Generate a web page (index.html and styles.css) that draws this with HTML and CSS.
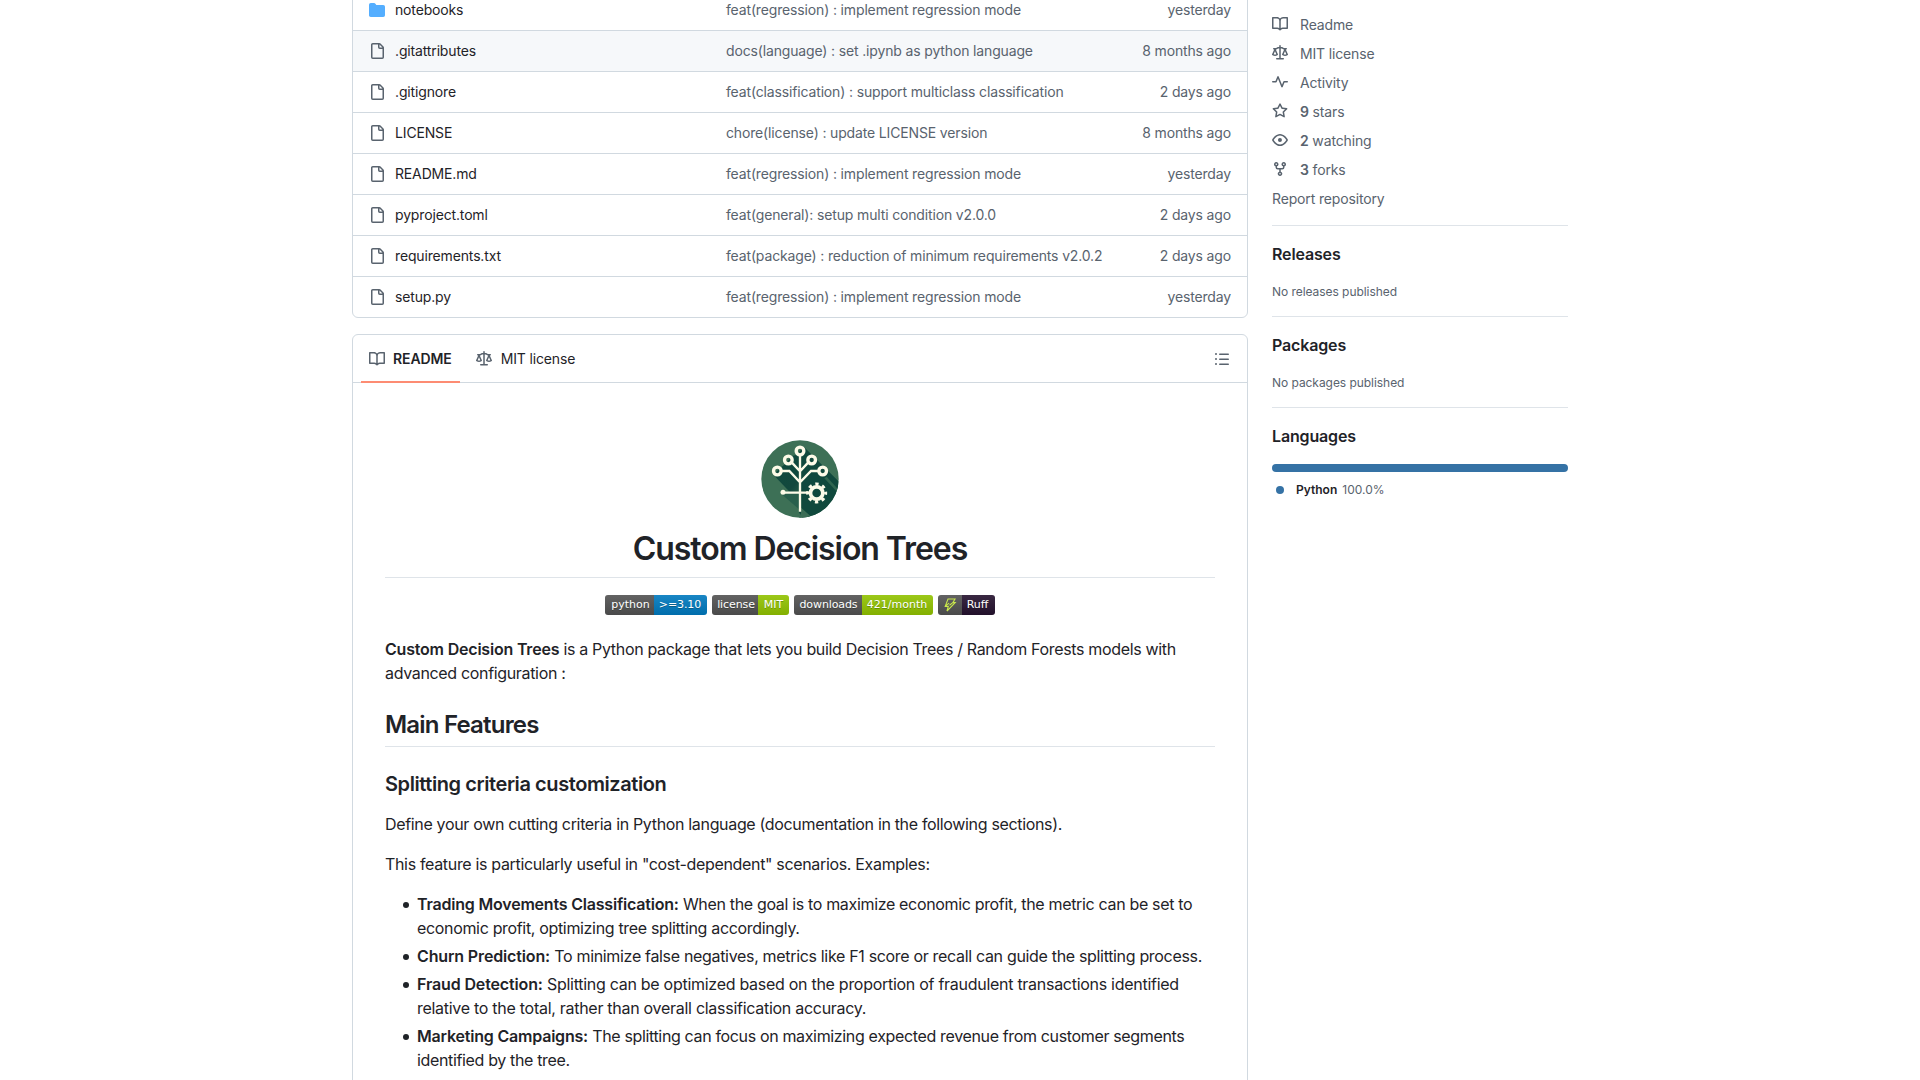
FILE: index.html
```html
<!DOCTYPE html>
<html lang="en">
<head>
<meta charset="utf-8">
<title>Custom Decision Trees</title>
<link rel="stylesheet" href="styles.css">
</head>
<body>
<svg class="defs" width="0" height="0" aria-hidden="true">
  <symbol id="folder" viewBox="0 0 16 16"><path d="M1.75 1A1.75 1.75 0 0 0 0 2.75v10.5C0 14.216.784 15 1.75 15h12.5A1.75 1.75 0 0 0 16 13.25v-8.5A1.75 1.75 0 0 0 14.25 3H7.5a.25.25 0 0 1-.2-.1l-.9-1.2C6.07 1.26 5.55 1 5 1H1.75Z"/></symbol>
  <symbol id="file" viewBox="0 0 16 16"><path d="M2 1.75C2 .784 2.784 0 3.75 0h6.586c.464 0 .909.184 1.237.513l2.914 2.914c.329.328.513.773.513 1.237v9.586A1.75 1.75 0 0 1 13.25 16h-9.5A1.75 1.75 0 0 1 2 14.25Zm1.75-.25a.25.25 0 0 0-.25.25v12.5c0 .138.112.25.25.25h9.5a.25.25 0 0 0 .25-.25V6h-2.75A1.75 1.75 0 0 1 9 4.25V1.5Zm6.75.062V4.25c0 .138.112.25.25.25h2.688l-.011-.013-2.914-2.914-.013-.011Z"/></symbol>
  <symbol id="book" viewBox="0 0 16 16"><path d="M0 1.75A.75.75 0 0 1 .75 1h4.253c1.227 0 2.317.59 3 1.501A3.743 3.743 0 0 1 11.006 1h4.245a.75.75 0 0 1 .75.75v10.5a.75.75 0 0 1-.75.75h-4.507a2.25 2.25 0 0 0-1.591.659l-.622.621a.75.75 0 0 1-1.06 0l-.622-.621A2.25 2.25 0 0 0 5.258 13H.75a.75.75 0 0 1-.75-.75Zm7.251 10.324.004-5.073-.002-2.253A2.25 2.25 0 0 0 5.003 2.5H1.5v9h3.757a3.75 3.75 0 0 1 1.994.574ZM8.755 4.75l-.004 7.322a3.752 3.752 0 0 1 1.992-.572H14.5v-9h-3.495a2.25 2.25 0 0 0-2.25 2.25Z"/></symbol>
  <symbol id="law" viewBox="0 0 16 16"><path d="M8.75.75V2h.985c.304 0 .603.08.867.231l1.29.736c.038.022.08.033.124.033h2.234a.75.75 0 0 1 0 1.5h-.427l2.111 4.692a.75.75 0 0 1-.154.838l-.53-.53.529.531-.001.002-.002.002-.006.006-.006.005-.01.01-.045.04c-.21.176-.441.327-.686.45C14.556 10.78 13.88 11 13 11a4.498 4.498 0 0 1-2.023-.454 3.544 3.544 0 0 1-.686-.45l-.045-.04-.016-.015-.006-.006-.004-.004v-.001a.75.75 0 0 1-.154-.838L12.178 4.5h-.162c-.305 0-.604-.079-.868-.231l-1.29-.736a.245.245 0 0 0-.124-.033H8.75V13h2.5a.75.75 0 0 1 0 1.5h-6.5a.75.75 0 0 1 0-1.5h2.5V3.5h-.984a.245.245 0 0 0-.124.033l-1.289.737c-.265.15-.564.23-.869.23h-.162l2.112 4.692a.75.75 0 0 1-.154.838l-.53-.53.529.531-.001.002-.002.002-.006.006-.016.015-.045.04c-.21.176-.441.327-.686.45C4.556 10.78 3.88 11 3 11a4.498 4.498 0 0 1-2.023-.454 3.544 3.544 0 0 1-.686-.45l-.045-.04-.016-.015-.006-.006-.004-.004v-.001a.75.75 0 0 1-.154-.838L2.178 4.5H1.75a.75.75 0 0 1 0-1.5h2.234a.249.249 0 0 0 .125-.033l1.288-.737c.265-.15.564-.23.869-.23h.984V.75a.75.75 0 0 1 1.5 0Zm2.945 8.477c.285.135.718.273 1.305.273s1.02-.138 1.305-.273L13 6.327Zm-10 0c.285.135.718.273 1.305.273s1.02-.138 1.305-.273L3 6.327Z"/></symbol>
  <symbol id="pulse" viewBox="0 0 16 16"><path d="M6 2c.306 0 .582.187.696.471L10 10.731l1.304-3.26A.751.751 0 0 1 12 7h3.25a.75.75 0 0 1 0 1.5h-2.742l-1.812 4.528a.751.751 0 0 1-1.392 0L6 4.77 4.696 8.03A.75.75 0 0 1 4 8.5H.75a.75.75 0 0 1 0-1.5h2.742l1.812-4.529A.751.751 0 0 1 6 2Z"/></symbol>
  <symbol id="star" viewBox="0 0 16 16"><path d="M8 .25a.75.75 0 0 1 .673.418l1.882 3.815 4.21.612a.75.75 0 0 1 .416 1.279l-3.046 2.97.719 4.192a.751.751 0 0 1-1.088.791L8 12.347l-3.766 1.98a.75.75 0 0 1-1.088-.79l.72-4.194L.818 6.374a.75.75 0 0 1 .416-1.28l4.21-.611L7.327.668A.75.75 0 0 1 8 .25Zm0 2.445L6.615 5.5a.75.75 0 0 1-.564.41l-3.097.45 2.24 2.184a.75.75 0 0 1 .216.664l-.528 3.084 2.769-1.456a.75.75 0 0 1 .698 0l2.77 1.456-.53-3.084a.75.75 0 0 1 .216-.664l2.24-2.183-3.096-.45a.75.75 0 0 1-.564-.41L8 2.694Z"/></symbol>
  <symbol id="eye" viewBox="0 0 16 16"><path d="M8 2c1.981 0 3.671.992 4.933 2.078 1.27 1.091 2.187 2.345 2.637 3.023a1.62 1.62 0 0 1 0 1.798c-.45.678-1.367 1.932-2.637 3.023C11.67 13.008 9.981 14 8 14c-1.981 0-3.671-.992-4.933-2.078C1.797 10.83.88 9.576.43 8.898a1.62 1.62 0 0 1 0-1.798c.45-.677 1.367-1.931 2.637-3.022C4.33 2.992 6.019 2 8 2ZM1.679 7.932a.12.12 0 0 0 0 .136c.411.622 1.241 1.75 2.366 2.717C5.176 11.758 6.527 12.5 8 12.5c1.473 0 2.825-.742 3.955-1.715 1.124-.967 1.954-2.096 2.366-2.717a.12.12 0 0 0 0-.136c-.412-.621-1.242-1.75-2.366-2.717C10.824 4.242 9.473 3.5 8 3.5c-1.473 0-2.825.742-3.955 1.715-1.124.967-1.954 2.096-2.366 2.717ZM8 10a2 2 0 1 1-.001-3.999A2 2 0 0 1 8 10Z"/></symbol>
  <symbol id="fork" viewBox="0 0 16 16"><path d="M5 5.372v.878c0 .414.336.75.75.75h4.5a.75.75 0 0 0 .75-.75v-.878a2.25 2.25 0 1 1 1.5 0v.878a2.25 2.25 0 0 1-2.25 2.25h-1.5v2.128a2.251 2.251 0 1 1-1.5 0V8.5h-1.5A2.25 2.25 0 0 1 3.5 6.25v-.878a2.25 2.25 0 1 1 1.5 0ZM5 3.25a.75.75 0 1 0-1.5 0 .75.75 0 0 0 1.5 0Zm6.75.75a.75.75 0 1 0 0-1.5.75.75 0 0 0 0 1.5Zm-3 8.75a.75.75 0 1 0-1.5 0 .75.75 0 0 0 1.5 0Z"/></symbol>
  <symbol id="list" viewBox="0 0 16 16"><path d="M5.75 2.5h8.5a.75.75 0 0 1 0 1.5h-8.5a.75.75 0 0 1 0-1.5Zm0 5h8.5a.75.75 0 0 1 0 1.5h-8.5a.75.75 0 0 1 0-1.5Zm0 5h8.5a.75.75 0 0 1 0 1.5h-8.5a.75.75 0 0 1 0-1.5ZM2 14a1 1 0 1 1 0-2 1 1 0 0 1 0 2Zm1-6a1 1 0 1 1-2 0 1 1 0 0 1 2 0ZM2 4a1 1 0 1 1 0-2 1 1 0 0 1 0 2Z"/></symbol>
</svg>

<div class="page">
  <main class="main">
    <section class="files">
      <div class="row"><span class="name"><svg class="icon folder"><use href="#folder"/></svg>notebooks</span><span class="msg">feat(regression) : implement regression mode</span><span class="age">yesterday</span></div>
      <div class="row hovered"><span class="name"><svg class="icon"><use href="#file"/></svg>.gitattributes</span><span class="msg">docs(language) : set .ipynb as python language</span><span class="age">8 months ago</span></div>
      <div class="row"><span class="name"><svg class="icon"><use href="#file"/></svg>.gitignore</span><span class="msg">feat(classification) : support multiclass classification</span><span class="age">2 days ago</span></div>
      <div class="row"><span class="name"><svg class="icon"><use href="#file"/></svg>LICENSE</span><span class="msg">chore(license) : update LICENSE version</span><span class="age">8 months ago</span></div>
      <div class="row"><span class="name"><svg class="icon"><use href="#file"/></svg>README.md</span><span class="msg">feat(regression) : implement regression mode</span><span class="age">yesterday</span></div>
      <div class="row"><span class="name"><svg class="icon"><use href="#file"/></svg>pyproject.toml</span><span class="msg">feat(general): setup multi condition v2.0.0</span><span class="age">2 days ago</span></div>
      <div class="row"><span class="name"><svg class="icon"><use href="#file"/></svg>requirements.txt</span><span class="msg">feat(package) : reduction of minimum requirements v2.0.2</span><span class="age">2 days ago</span></div>
      <div class="row"><span class="name"><svg class="icon"><use href="#file"/></svg>setup.py</span><span class="msg">feat(regression) : implement regression mode</span><span class="age">yesterday</span></div>
    </section>

    <section class="readme">
      <nav class="tabs">
        <a class="tab active"><svg class="icon"><use href="#book"/></svg>README</a>
        <a class="tab"><svg class="icon"><use href="#law"/></svg>MIT license</a>
        <svg class="icon outline"><use href="#list"/></svg>
      </nav>
      <article class="content">
        <svg class="logo" viewBox="18 25 234 234">
          <defs>
            <clipPath id="disc"><circle cx="135" cy="142" r="116"/></clipPath>
            <linearGradient id="shade" x1="0" y1="0" x2="1" y2="1"><stop offset="0" stop-color="#0f4a3e"/><stop offset=".65" stop-color="#13483d"/><stop offset="1" stop-color="#2c624c"/></linearGradient>
          </defs>
          <g clip-path="url(#disc)">
            <rect x="18" y="25" width="234" height="234" fill="#3d7056"/>
            <path fill="#10493d" d="M147 46L270 168V275H150L132 242V190L104 152L55 130L80 106L90 97L112 73L123 70Z"/>
            <path fill="url(#shade)" d="M55 129L80 106L136 162V200L130 208Z"/>
            <path fill="#285f4c" d="M80 188L90 178L136 186V236Z"/>
            <path fill="#3b6d56" d="M138 244L138 228L180 265H130Z"/>
            <path fill="#2f6650" d="M215 135L255 179V190L208 140Z"/>
          </g>
          <g fill="none" stroke="#fdfbe8" stroke-width="7">
            <path d="M135 70V240M110 92L135 119L160 92M79 118H103L135 152L168 118H191M84 183H160"/>
            <circle cx="135" cy="58" r="11.5" stroke-width="10"/>
            <circle cx="100" cy="85" r="11.5" stroke-width="10"/>
            <circle cx="170" cy="85" r="11.5" stroke-width="10"/>
            <circle cx="67" cy="118" r="11.5" stroke-width="10"/>
            <circle cx="203" cy="118" r="11.5" stroke-width="10"/>
            <circle cx="185" cy="184" r="18.5" stroke-width="11"/>
            <circle cx="185" cy="184" r="27" stroke-width="9" stroke-dasharray="10 11.206" stroke-dashoffset="5"/>
          </g>
          <circle cx="84" cy="182" r="7.5" fill="#fdfbe8"/>
        </svg>
        <h1>Custom Decision Trees</h1>
        <div class="badges">
          <span class="badge"><span class="label python">python</span><span class="value blue">&gt;=3.10</span></span>
          <span class="badge"><span class="label license">license</span><span class="value green mit">MIT</span></span>
          <span class="badge"><span class="label downloads">downloads</span><span class="value green month">421/month</span></span>
          <span class="badge"><span class="label bolt"><svg width="14" height="14" viewBox="0 0 14 14"><path d="M5 1h7L9.8 4.6h2.4L4 13l1.3-4.6H2.2L5 1Zm1.1 4.1L3.2 7.4M9.8 4.6L6.5 7.2" fill="none" stroke="#c9e84c" stroke-width="1.1"/></svg></span><span class="value ruff">Ruff</span></span>
        </div>
        <p><strong>Custom Decision Trees</strong> is a Python package that lets you build Decision Trees / Random Forests models with advanced configuration :</p>
        <h2>Main Features</h2>
        <h3>Splitting criteria customization</h3>
        <p>Define your own cutting criteria in Python language (documentation in the following sections).</p>
        <p>This feature is particularly useful in "cost-dependent" scenarios. Examples:</p>
        <ul>
          <li><strong>Trading Movements Classification:</strong> When the goal is to maximize economic profit, the metric can be set to economic profit, optimizing tree splitting accordingly.</li>
          <li class="churn"><strong>Churn Prediction:</strong> To minimize false negatives, metrics like F1 score or recall can guide the splitting process.</li>
          <li class="fraud"><strong>Fraud Detection:</strong> Splitting can be optimized based on the proportion of fraudulent transactions identified relative to the total, rather than overall classification accuracy.</li>
          <li class="marketing"><strong>Marketing Campaigns:</strong> The splitting can focus on maximizing expected revenue from customer segments identified by the tree.</li>
        </ul>
      </article>
    </section>
  </main>

  <aside class="sidebar">
    <section class="about">
      <a><svg class="icon"><use href="#book"/></svg>Readme</a>
      <a><svg class="icon"><use href="#law"/></svg>MIT license</a>
      <a><svg class="icon"><use href="#pulse"/></svg>Activity</a>
      <a><svg class="icon"><use href="#star"/></svg><span><strong>9</strong> stars</span></a>
      <a><svg class="icon"><use href="#eye"/></svg><span><strong>2</strong> watching</span></a>
      <a><svg class="icon"><use href="#fork"/></svg><span><strong>3</strong> forks</span></a>
      <a>Report repository</a>
    </section>
    <section class="block"><h4>Releases</h4><div class="note">No releases published</div></section>
    <section class="block"><h4>Packages</h4><div class="note">No packages published</div></section>
    <section class="block">
      <h4>Languages</h4>
      <div class="bar"></div>
      <div class="lang"><span class="dot"></span><strong>Python</strong><span>100.0%</span></div>
    </section>
  </aside>
</div>
</body>
</html>
```
FILE: styles.css
```css
* { box-sizing: border-box; }
html, body { height: 100%; overflow: hidden; }
body {
  margin: 0;
  background: #fff;
  color: #1f2328;
  font: 14px/21px Inter, "Liberation Sans", sans-serif;
  letter-spacing: -0.15px;
}
strong { font-weight: 600; }
.defs { display: none; }
.icon { width: 16px; height: 16px; fill: #59636e; flex: none; }

.page {
  width: 1216px;
  height: 1080px;
  margin: 0 auto;
  display: grid;
  grid-template-columns: 896px 296px;
  gap: 24px;
}
.main { min-width: 0; }

/* File table */
.files {
  margin-top: -11px;
  border: 1px solid #d1d9e0;
  border-radius: 6px;
}
.row {
  display: flex;
  align-items: center;
  height: 41px;
  padding: 0 16px 1px;
  border-bottom: 1px solid #d1d9e0;
  color: #59636e;
}
.row:last-child { height: 40px; border-bottom: 0; }
.row .icon { margin-top: 1px; }
.hovered { background: #f6f8fa; }
.name { display: flex; align-items: center; gap: 10px; width: 357px; color: #1f2328; }
.icon.folder { fill: #54aeff; }
.msg { flex: 1; white-space: nowrap; }

/* Readme */
.readme {
  margin-top: 16px;
  border: 1px solid #d1d9e0;
  border-radius: 6px 6px 0 0;
  height: 800px;
}
.tabs {
  display: flex;
  align-items: center;
  height: 48px;
  padding: 0 17px 0 8px;
  border-bottom: 1px solid #d1d9e0;
}
.tab {
  display: flex;
  align-items: center;
  gap: 8px;
  height: 48px;
  padding: 1px 8px 0;
  margin: 0 8px 0 0;
  border-bottom: 2px solid transparent;
  align-self: flex-start;
}
.tab .icon { margin-top: 1px; }
.tab + .tab { gap: 9px; }
.active { border-color: #fd8c73; font-weight: 600; letter-spacing: -0.1px; }
.outline { margin-left: auto; }

.content {
  padding: 32px;
  font-size: 16px;
  line-height: 24px;
  letter-spacing: -0.335px;
}
.content strong { letter-spacing: -0.2px; }
.logo { display: block; width: 78px; height: 78px; margin: 25px auto 11px; }
h1, h2, h3, h4 { margin: 0; font-weight: 600; line-height: 1.25; }
h1 {
  padding-bottom: 8px;
  border-bottom: 1px solid #d1d9e0b3;
  font-size: 32px;
  text-align: center;
  letter-spacing: -1.08px;
}
h2 {
  margin-top: 25px;
  padding-bottom: 6px;
  border-bottom: 1px solid #d1d9e0b3;
  font-size: 24px;
  letter-spacing: -0.8px;
}
h3 { margin: 25px 0 15px; font-size: 20px; letter-spacing: -0.42px; }
p { margin: 0 0 16px; }
ul { margin: 0; padding-left: 32px; list-style: none; }
li + li { margin-top: 4px; }
li::before {
  content: "";
  float: left;
  width: 6px;
  height: 6px;
  margin: 10px 0 0 -14px;
  border-radius: 50%;
  background: #1f2328;
}
.churn { letter-spacing: -0.325px; }
.fraud { letter-spacing: -0.28px; }
.churn strong, .fraud strong { letter-spacing: -0.14px; }
.marketing { letter-spacing: -0.35px; }

.badges {
  display: flex;
  justify-content: center;
  gap: 5px;
  margin: 17px 0 22px;
  font: 11px/20px "DejaVu Sans", sans-serif;
  letter-spacing: 0;
  color: #fff;
  text-shadow: 0 1px #0104;
}
.badge {
  display: flex;
  height: 20px;
  border-radius: 3px;
  overflow: hidden;
}
.label, .value { text-align: center; background-image: linear-gradient(#bbb2, #0002); }
.label { background-color: #555; }
.python { width: 49px; padding-left: 2px; }
.license { width: 46px; padding-left: 2px; letter-spacing: -0.1px; }
.downloads { width: 68px; padding-left: 1px; letter-spacing: -0.1px; }
.bolt { width: 24px; display: flex; align-items: center; justify-content: center; }
.blue { width: 53px; background-color: #007ec6; letter-spacing: -0.1px; padding-right: 1px; }
.green { background-color: #97ca00; }
.mit { width: 31px; }
.month { width: 71px; padding-right: 1px; }
.ruff { width: 33px; background-color: #261230; padding-right: 2px; }

/* Sidebar */
.sidebar { padding-top: 14px; color: #59636e; }
.about { display: grid; gap: 8px; padding-bottom: 16px; }
.about a { display: flex; align-items: flex-start; gap: 12px; height: 21px; }
.about .icon { margin-top: 2px; }
.block { padding: 16px 0; border-top: 1px solid #d1d9e0b3; }
.block h4 { font-size: 16px; line-height: 24px; margin-bottom: 16px; color: #1f2328; }
.note, .lang { font-size: 12px; line-height: 18px; letter-spacing: -0.05px; }
.note { padding-top: 1px; margin-bottom: -1px; }
.bar { height: 8px; border-radius: 6px; background: #3572a5; }
.lang { display: flex; align-items: center; gap: 5px; margin-top: 9px; letter-spacing: 0; }
.lang strong { color: #1f2328; }
.dot { width: 8px; height: 8px; margin: 0 7px 0 4px; border-radius: 50%; background: #3572a5; }
```
